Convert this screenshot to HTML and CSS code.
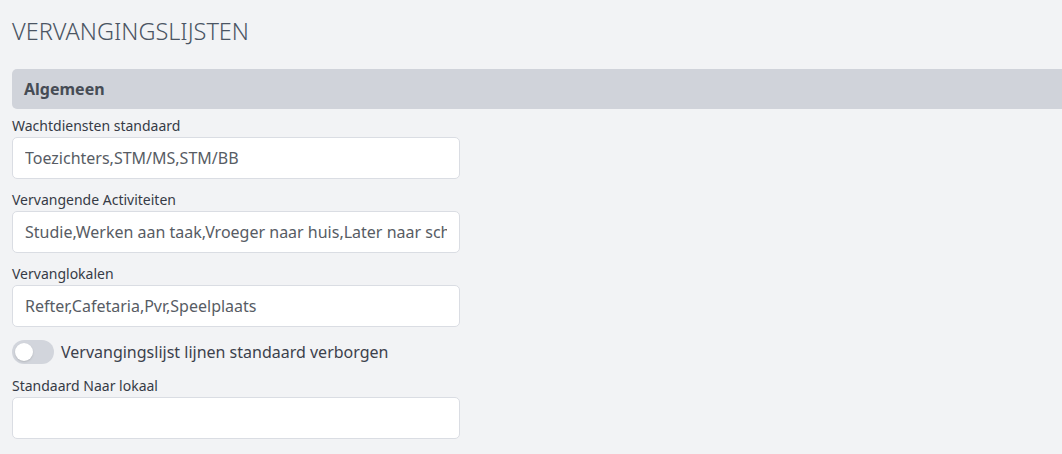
FILE: index.html
```html
<!DOCTYPE html>
<html lang="nl">
<head>
<meta charset="utf-8">
<title>Vervangingslijsten</title>
<link rel="stylesheet" href="styles.css">
</head>
<body>
<div class="page">
  <h1 class="title">VERVANGINGSLIJSTEN</h1>
  <div class="section-header">Algemeen</div>
  <div class="form">
    <div class="group">
      <label class="label">Wachtdiensten standaard</label>
      <input class="input" type="text" value="Toezichters,STM/MS,STM/BB">
    </div>
    <div class="group">
      <label class="label">Vervangende Activiteiten</label>
      <input class="input" type="text" value="Studie,Werken aan taak,Vroeger naar huis,Later naar school">
    </div>
    <div class="group">
      <label class="label">Vervanglokalen</label>
      <input class="input" type="text" value="Refter,Cafetaria,Pvr,Speelplaats">
    </div>
    <div class="switch-row">
      <span class="switch"><span class="knob"></span></span>
      <span class="switch-label">Vervangingslijst lijnen standaard verborgen</span>
    </div>
    <div class="group">
      <label class="label">Standaard Naar lokaal</label>
      <input class="input" type="text" value="">
    </div>
  </div>
</div>
</body>
</html>
```
FILE: styles.css
```css
html, body {
  margin: 0;
  padding: 0;
  background: #f2f3f5;
  font-family: "Noto Sans", "Open Sans", sans-serif;
  overflow: hidden;
}
.page {
  padding: 16px 0 0 12px;
}
.title {
  margin: 0;
  font-weight: 300;
  font-size: 23.5px;
  line-height: 30px;
  color: #4b5563;
  letter-spacing: 0;
}
.section-header {
  margin-top: 23px;
  height: 40px;
  background: #d0d3da;
  border-radius: 5px 0 0 5px;
  display: flex;
  align-items: center;
  padding-left: 12px;
  font-weight: 700;
  font-size: 16px;
  color: #464c55;
}
.form {
  display: flex;
  flex-direction: column;
  padding-top: 7px;
}
.group {
  display: flex;
  flex-direction: column;
  margin-bottom: 11px;
}
.label {
  font-size: 14px;
  line-height: 20px;
  color: #363b46;
  margin-bottom: 1px;
}
.input {
  box-sizing: border-box;
  width: 448px;
  height: 42px;
  border: 1px solid #dadde3;
  border-radius: 5px;
  background: #fff;
  padding: 0 12px;
  font-family: "Noto Sans", "Open Sans", sans-serif;
  font-size: 16px;
  color: #575c64;
  outline: none;
}
.switch-row {
  display: flex;
  align-items: center;
  gap: 7px;
  height: 24px;
  margin: 2px 0 12px 0;
}
.switch {
  box-sizing: border-box;
  width: 42px;
  height: 24px;
  border-radius: 12px;
  background: #d2d5dc;
  display: flex;
  align-items: center;
  padding-left: 3px;
}
.knob {
  width: 18px;
  height: 18px;
  border-radius: 50%;
  background: #fff;
  box-shadow: 0 1px 2px rgba(0,0,0,0.15);
}
.switch-label {
  font-size: 16px;
  color: #3c414c;
}
```
